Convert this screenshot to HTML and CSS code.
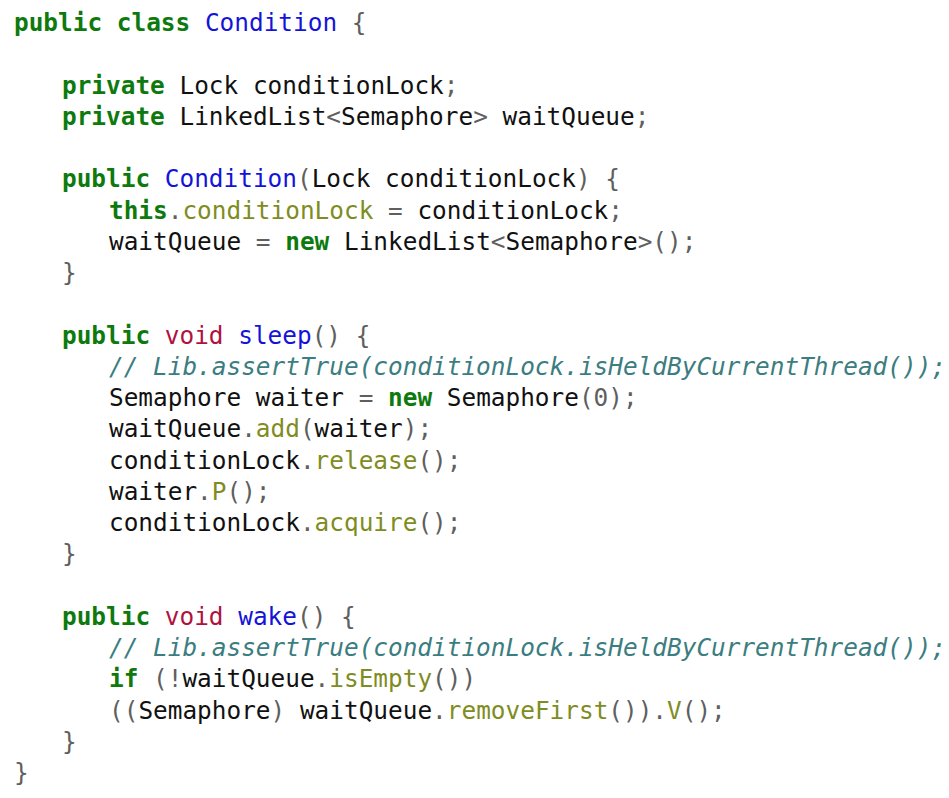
FILE: index.html
```html
<!DOCTYPE html>
<html>
<head>
<meta charset="utf-8">
<link rel="stylesheet" href="styles.css">
</head>
<body>
<div class="code">
<div class="ln"><span class="kw">public</span> <span class="kw">class</span> <span class="ty">Condition</span> <span class="p">{</span></div>
<div class="ln"> </div>
<div class="ln i1"><span class="kw">private</span> Lock conditionLock<span class="p">;</span></div>
<div class="ln i1"><span class="kw">private</span> LinkedList<span class="p">&lt;</span>Semaphore<span class="p">&gt;</span> waitQueue<span class="p">;</span></div>
<div class="ln"> </div>
<div class="ln i1"><span class="kw">public</span> <span class="ty">Condition</span><span class="p">(</span>Lock conditionLock<span class="p">)</span> <span class="p">{</span></div>
<div class="ln i2"><span class="kw">this</span><span class="p">.</span><span class="fd">conditionLock</span> <span class="p">=</span> conditionLock<span class="p">;</span></div>
<div class="ln i2">waitQueue <span class="p">=</span> <span class="kw">new</span> LinkedList<span class="p">&lt;</span>Semaphore<span class="p">&gt;();</span></div>
<div class="ln i1"><span class="p">}</span></div>
<div class="ln"> </div>
<div class="ln i1"><span class="kw">public</span> <span class="vd">void</span> <span class="ty">sleep</span><span class="p">()</span> <span class="p">{</span></div>
<div class="ln i2"><span class="cm">// Lib.assertTrue(conditionLock.isHeldByCurrentThread());</span></div>
<div class="ln i2">Semaphore waiter <span class="p">=</span> <span class="kw">new</span> Semaphore<span class="p">(0);</span></div>
<div class="ln i2">waitQueue<span class="p">.</span><span class="fd">add</span><span class="p">(</span>waiter<span class="p">);</span></div>
<div class="ln i2">conditionLock<span class="p">.</span><span class="fd">release</span><span class="p">();</span></div>
<div class="ln i2">waiter<span class="p">.</span><span class="fd">P</span><span class="p">();</span></div>
<div class="ln i2">conditionLock<span class="p">.</span><span class="fd">acquire</span><span class="p">();</span></div>
<div class="ln i1"><span class="p">}</span></div>
<div class="ln"> </div>
<div class="ln i1"><span class="kw">public</span> <span class="vd">void</span> <span class="ty">wake</span><span class="p">()</span> <span class="p">{</span></div>
<div class="ln i2"><span class="cm">// Lib.assertTrue(conditionLock.isHeldByCurrentThread());</span></div>
<div class="ln i2"><span class="kw">if</span> <span class="p">(!</span>waitQueue<span class="p">.</span><span class="fd">isEmpty</span><span class="p">())</span></div>
<div class="ln i2"><span class="p">((</span>Semaphore<span class="p">)</span> waitQueue<span class="p">.</span><span class="fd">removeFirst</span><span class="p">()).</span><span class="fd">V</span><span class="p">();</span></div>
<div class="ln i1"><span class="p">}</span></div>
<div class="ln"><span class="p">}</span></div>
</div>
</body>
</html>
```
FILE: styles.css
```css
html, body {
  margin: 0;
  padding: 0;
  background: #ffffff;
}
.code {
  padding: 7px 0 0 14px;
  font-family: "DejaVu Sans Mono", "Liberation Mono", monospace;
  font-size: 24.4px;
  line-height: 31.25px;
  color: #111111;
}
.ln {
  white-space: pre;
  height: 31.25px;
}
.i1 { padding-left: 48px; }
.i2 { padding-left: 95px; }
.kw { color: #0e7a0e; font-weight: bold; }
.ty { color: #1414d8; }
.vd { color: #b0123e; }
.p { color: #5f5f5f; }
.fd { color: #7f8c22; }
.cm { color: #3b7d80; font-style: italic; }
```
